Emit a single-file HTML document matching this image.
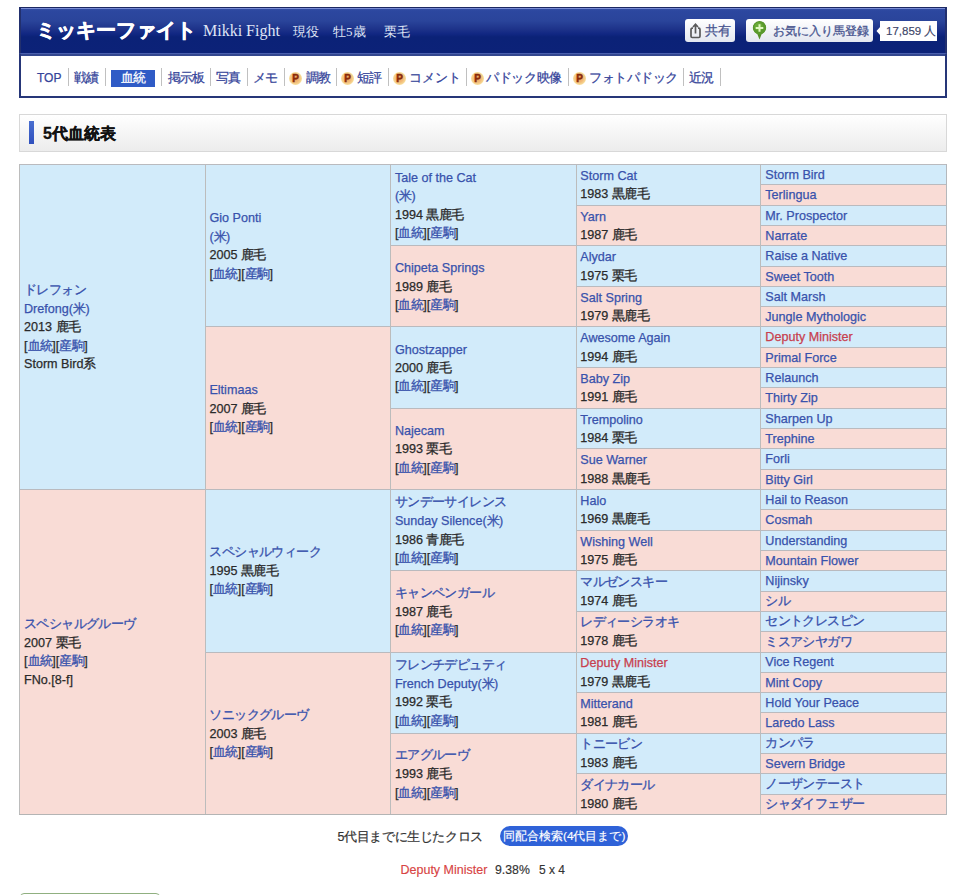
<!DOCTYPE html>
<html><head><meta charset="utf-8">
<style>
*{box-sizing:border-box}
html,body{margin:0;padding:0;background:#fff;width:962px;height:895px;overflow:hidden;position:relative;font-family:"Liberation Sans",sans-serif;color:#333}
.a{position:absolute;white-space:nowrap}
#hdr{position:absolute;left:19px;top:7px;width:928px;height:46px;background:linear-gradient(#3650a6 0px,#2c479f 3px,#2a449a 13px,#1e338a 21px,#112782 26px,#0b2277 29px,#0c2278 45px);border-top:1px solid #1c2862;border-left:2px solid #22306e;border-right:2px solid #22306e}
#hdr:before{content:"";position:absolute;left:0;right:0;top:0;height:1px;background:#7a8cd4}
#band{position:absolute;left:19px;top:53px;width:928px;height:3px;background:#33478f;border-top:1px solid #4a5fae;border-left:2px solid #263678;border-right:2px solid #263678}
#nav{position:absolute;left:19px;top:56px;width:928px;height:42px;background:#fff;border:2px solid #263678;border-top:none}
.ttl{color:#fff;font-weight:bold;font-size:20px;line-height:20px;-webkit-text-stroke:0.6px #fff}
.sub{color:#dfe5f5;font-family:"Liberation Serif",serif;font-size:16px;line-height:18px}
.subj{color:#dfe5f5;font-family:"Liberation Serif",serif;font-size:13px;line-height:16px}
.btn{position:absolute;border-radius:3px;background:linear-gradient(#ffffff,#e4e7f0)}
.bt{color:#4a5690;line-height:14px;-webkit-text-stroke:0.3px #4a5690}
.cnt{position:absolute;background:#fff}
.nv{font-size:12px;color:#35449a;line-height:14px;-webkit-text-stroke:0.25px #35449a}
.nj{font-size:13px;letter-spacing:-0.9px}
.sep{position:absolute;top:68px;width:1px;height:18px;background:#c0c0c0}
.act{position:absolute;left:111px;top:69.5px;width:44px;height:17px;background:#2f5bc6}
.pi{position:absolute;top:72px;width:13px;height:13px;border-radius:50%;background:radial-gradient(circle at 50% 50%,#eea060 0,#f2bb78 40%,#f7dc98 68%,#f6e4a8 100%)}
.pi:after{content:"P";position:absolute;left:3.2px;top:0;font-size:10px;font-weight:bold;color:#8a2a08;line-height:13px;-webkit-text-stroke:0.5px #8a2a08}
#sec{position:absolute;left:19px;top:114px;width:928px;height:38px;border:1px solid #d8d8d8;background:linear-gradient(#ffffff,#ececec)}
#sec .bar{position:absolute;left:9px;top:6px;width:5px;height:23px;background:linear-gradient(#4a6fd0,#2f50bd)}
#sec .t{position:absolute;left:23px;top:8.5px;font-size:16px;font-weight:bold;color:#111;white-space:nowrap;line-height:20px;-webkit-text-stroke:0.3px #111}
#tbl{position:absolute;left:19px;top:164px;width:928px;height:651px;border-right:1px solid #b4b8bc;border-bottom:1px solid #b4b4b4}
.cell{position:absolute;border-top:1px solid #bababe;border-left:1px solid #bcbcbc;overflow:hidden}
.cell.m{background:#d2ebfa}
.cell.f{background:#f9dcd6}
.ct{position:absolute;left:4px;right:0}
.ln{height:18.4px;line-height:18.4px;font-size:12.6px;white-space:nowrap;color:#2a2a2a;-webkit-text-stroke:0.25px currentColor}
.j{-webkit-text-stroke:0.3px currentColor;font-size:13px;letter-spacing:-0.6px}
.k{position:relative;top:-0.5px}
.l{color:#3852ac}
.r{color:#c8404e}
</style></head><body>
<div id="hdr"></div>
<div id="band"></div>
<div id="nav"></div>
<div class="a ttl" style="left:36px;top:20px">ミッキーファイト</div>
<div class="a sub" style="left:203px;top:22px">Mikki Fight</div>
<div class="a subj" style="left:293px;top:24px">現役</div>
<div class="a subj" style="left:333px;top:24px">牡5歳</div>
<div class="a subj" style="left:384px;top:24px">栗毛</div>

<div class="btn" style="left:685px;top:19px;width:50px;height:23px"></div>
<svg class="a" style="left:689px;top:22px" width="13" height="17" viewBox="0 0 13 17"><path d="M4 6.2 H3.2 Q2 6.2 2 7.4 V14.3 Q2 15.5 3.2 15.5 H9.8 Q11 15.5 11 14.3 V7.4 Q11 6.2 9.8 6.2 H9" fill="none" stroke="#5a5a5a" stroke-width="1.7"/><path d="M6.5 11.5 V2.5 M4 5 L6.5 2.2 L9 5" fill="none" stroke="#5a5a5a" stroke-width="1.7"/></svg>
<div class="a bt" style="left:705px;top:24px;font-size:12.5px">共有</div>

<div class="btn" style="left:745.5px;top:19px;width:127px;height:23px"></div>
<svg class="a" style="left:752px;top:20.5px" width="15" height="20" viewBox="0 0 15 20"><path d="M7.5 18.5 L5.2 12.8 A6.6 6.6 0 1 1 9.8 12.8 Z" fill="#558f28"/><circle cx="7.5" cy="7" r="6.5" fill="#5a9a2c"/><circle cx="6.6" cy="5.6" r="4.2" fill="#6eae3c" opacity="0.8"/><path d="M7.5 3.2 V10.8 M3.7 7 H11.3" stroke="#e0f8c0" stroke-width="2"/></svg>
<div class="a bt" style="left:773px;top:24px;font-size:11.5px">お気に入り馬登録</div>

<div class="cnt" style="left:880px;top:21px;width:57px;height:20px"></div>
<svg class="a" style="left:876px;top:26px" width="5" height="10"><path d="M5 0 L0.5 5 L5 10 Z" fill="#fff"/></svg>
<div class="a" style="left:886px;top:23.5px;font-size:11.5px;color:#3c4468;line-height:14px;-webkit-text-stroke:0.15px currentColor">17,859 人</div>

<div class="a nv" style="left:37px;top:71px">TOP</div>
<div class="sep" style="left:68px"></div>
<div class="a nv nj" style="left:74px;top:71px">戦績</div>
<div class="sep" style="left:105px"></div>
<div class="act"></div>
<div class="a nv nj" style="left:121px;top:71px;color:#fff;-webkit-text-stroke:0.25px #fff">血統</div>
<div class="sep" style="left:161px"></div>
<div class="a nv nj" style="left:168px;top:71px">掲示板</div>
<div class="sep" style="left:210px"></div>
<div class="a nv nj" style="left:216px;top:71px">写真</div>
<div class="sep" style="left:247px"></div>
<div class="a nv nj" style="left:252.5px;top:71px;">メモ</div>
<div class="sep" style="left:284px"></div>
<div class="pi" style="left:289px"></div>
<div class="a nv nj" style="left:306px;top:71px">調教</div>
<div class="sep" style="left:336px"></div>
<div class="pi" style="left:341px"></div>
<div class="a nv nj" style="left:357px;top:71px">短評</div>
<div class="sep" style="left:388px"></div>
<div class="pi" style="left:393px"></div>
<div class="a nv nj" style="left:409px;top:71px;letter-spacing:0px">コメント</div>
<div class="sep" style="left:466px"></div>
<div class="pi" style="left:471px"></div>
<div class="a nv nj" style="left:486px;top:71px;letter-spacing:-0.35px">パドック映像</div>
<div class="sep" style="left:568px"></div>
<div class="pi" style="left:573px"></div>
<div class="a nv nj" style="left:589px;top:71px;letter-spacing:-0.3px">フォトパドック</div>
<div class="sep" style="left:683px"></div>
<div class="a nv nj" style="left:689px;top:71px">近況</div>
<div class="sep" style="left:720px"></div>

<div id="sec"><div class="bar"></div><div class="t">5代血統表</div></div>
<div id="tbl"></div>
<div class="cell m" style="left:19px;top:164.000px;width:186px;height:325.000px"><div class="ct" style="top:116.50px;left:4.00px"><div class="ln"><span class="l"><span class="j k">ドレフォン</span></span></div><div class="ln"><span class="l">Drefong(<span class="j">米</span>)</span></div><div class="ln">2013 <span class="j">鹿毛</span></div><div class="ln">[<span class="l"><span class="j">血統</span></span>][<span class="l"><span class="j">産駒</span></span>]</div><div class="ln">Storm Bird<span class="j">系</span></div></div></div>
<div class="cell f" style="left:19px;top:489.000px;width:186px;height:325.000px"><div class="ct" style="top:125.70px;left:4.00px"><div class="ln"><span class="l"><span class="j k">スペシャルグルーヴ</span></span></div><div class="ln">2007 <span class="j">栗毛</span></div><div class="ln">[<span class="l"><span class="j">血統</span></span>][<span class="l"><span class="j">産駒</span></span>]</div><div class="ln">FNo.[8-f]</div></div></div>
<div class="cell m" style="left:205px;top:164.000px;width:185px;height:162.000px"><div class="ct" style="top:44.45px;left:3.40px"><div class="ln"><span class="l">Gio Ponti</span></div><div class="ln"><span class="l">(<span class="j">米</span>)</span></div><div class="ln">2005 <span class="j">鹿毛</span></div><div class="ln">[<span class="l"><span class="j">血統</span></span>][<span class="l"><span class="j">産駒</span></span>]</div></div></div>
<div class="cell f" style="left:205px;top:326.000px;width:185px;height:163.000px"><div class="ct" style="top:54.15px;left:3.40px"><div class="ln"><span class="l">Eltimaas</span></div><div class="ln">2007 <span class="j">鹿毛</span></div><div class="ln">[<span class="l"><span class="j">血統</span></span>][<span class="l"><span class="j">産駒</span></span>]</div></div></div>
<div class="cell m" style="left:205px;top:489.000px;width:185px;height:163.000px"><div class="ct" style="top:53.65px;left:3.40px"><div class="ln"><span class="l"><span class="j k">スペシャルウィーク</span></span></div><div class="ln">1995 <span class="j">黒鹿毛</span></div><div class="ln">[<span class="l"><span class="j">血統</span></span>][<span class="l"><span class="j">産駒</span></span>]</div></div></div>
<div class="cell f" style="left:205px;top:652.000px;width:185px;height:162.000px"><div class="ct" style="top:53.15px;left:3.40px"><div class="ln"><span class="l"><span class="j k">ソニックグルーヴ</span></span></div><div class="ln">2003 <span class="j">鹿毛</span></div><div class="ln">[<span class="l"><span class="j">血統</span></span>][<span class="l"><span class="j">産駒</span></span>]</div></div></div>
<div class="cell m" style="left:390px;top:164.000px;width:186px;height:81.000px"><div class="ct" style="top:3.83px;left:3.90px"><div class="ln"><span class="l">Tale of the Cat</span></div><div class="ln"><span class="l">(<span class="j">米</span>)</span></div><div class="ln">1994 <span class="j">黒鹿毛</span></div><div class="ln">[<span class="l"><span class="j">血統</span></span>][<span class="l"><span class="j">産駒</span></span>]</div></div></div>
<div class="cell f" style="left:390px;top:245.000px;width:186px;height:81.000px"><div class="ct" style="top:13.28px;left:3.90px"><div class="ln"><span class="l">Chipeta Springs</span></div><div class="ln">1989 <span class="j">鹿毛</span></div><div class="ln">[<span class="l"><span class="j">血統</span></span>][<span class="l"><span class="j">産駒</span></span>]</div></div></div>
<div class="cell m" style="left:390px;top:326.000px;width:186px;height:82.000px"><div class="ct" style="top:13.53px;left:3.90px"><div class="ln"><span class="l">Ghostzapper</span></div><div class="ln">2000 <span class="j">鹿毛</span></div><div class="ln">[<span class="l"><span class="j">血統</span></span>][<span class="l"><span class="j">産駒</span></span>]</div></div></div>
<div class="cell f" style="left:390px;top:408.000px;width:186px;height:81.000px"><div class="ct" style="top:12.78px;left:3.90px"><div class="ln"><span class="l">Najecam</span></div><div class="ln">1993 <span class="j">栗毛</span></div><div class="ln">[<span class="l"><span class="j">血統</span></span>][<span class="l"><span class="j">産駒</span></span>]</div></div></div>
<div class="cell m" style="left:390px;top:489.000px;width:186px;height:81.000px"><div class="ct" style="top:3.83px;left:3.90px"><div class="ln"><span class="l"><span class="j k">サンデーサイレンス</span></span></div><div class="ln"><span class="l">Sunday Silence(<span class="j">米</span>)</span></div><div class="ln">1986 <span class="j">青鹿毛</span></div><div class="ln">[<span class="l"><span class="j">血統</span></span>][<span class="l"><span class="j">産駒</span></span>]</div></div></div>
<div class="cell f" style="left:390px;top:570.000px;width:186px;height:82.000px"><div class="ct" style="top:13.28px;left:3.90px"><div class="ln"><span class="l"><span class="j k">キャンペンガール</span></span></div><div class="ln">1987 <span class="j">鹿毛</span></div><div class="ln">[<span class="l"><span class="j">血統</span></span>][<span class="l"><span class="j">産駒</span></span>]</div></div></div>
<div class="cell m" style="left:390px;top:652.000px;width:186px;height:81.000px"><div class="ct" style="top:3.33px;left:3.90px"><div class="ln"><span class="l"><span class="j k">フレンチデピュティ</span></span></div><div class="ln"><span class="l">French Deputy(<span class="j">米</span>)</span></div><div class="ln">1992 <span class="j">栗毛</span></div><div class="ln">[<span class="l"><span class="j">血統</span></span>][<span class="l"><span class="j">産駒</span></span>]</div></div></div>
<div class="cell f" style="left:390px;top:733.000px;width:186px;height:81.000px"><div class="ct" style="top:12.78px;left:3.90px"><div class="ln"><span class="l"><span class="j k">エアグルーヴ</span></span></div><div class="ln">1993 <span class="j">鹿毛</span></div><div class="ln">[<span class="l"><span class="j">血統</span></span>][<span class="l"><span class="j">産駒</span></span>]</div></div></div>
<div class="cell m" style="left:576px;top:164.000px;width:184px;height:41.000px"><div class="ct" style="top:1.91px;left:3.30px"><div class="ln"><span class="l">Storm Cat</span></div><div class="ln">1983 <span class="j">黒鹿毛</span></div></div></div>
<div class="cell f" style="left:576px;top:205.000px;width:184px;height:40.000px"><div class="ct" style="top:1.54px;left:3.30px"><div class="ln"><span class="l">Yarn</span></div><div class="ln">1987 <span class="j">鹿毛</span></div></div></div>
<div class="cell m" style="left:576px;top:245.000px;width:184px;height:41.000px"><div class="ct" style="top:2.16px;left:3.30px"><div class="ln"><span class="l">Alydar</span></div><div class="ln">1975 <span class="j">栗毛</span></div></div></div>
<div class="cell f" style="left:576px;top:286.000px;width:184px;height:40.000px"><div class="ct" style="top:1.79px;left:3.30px"><div class="ln"><span class="l">Salt Spring</span></div><div class="ln">1979 <span class="j">黒鹿毛</span></div></div></div>
<div class="cell m" style="left:576px;top:326.000px;width:184px;height:41.000px"><div class="ct" style="top:2.41px;left:3.30px"><div class="ln"><span class="l">Awesome Again</span></div><div class="ln">1994 <span class="j">鹿毛</span></div></div></div>
<div class="cell f" style="left:576px;top:367.000px;width:184px;height:41.000px"><div class="ct" style="top:2.04px;left:3.30px"><div class="ln"><span class="l">Baby Zip</span></div><div class="ln">1991 <span class="j">鹿毛</span></div></div></div>
<div class="cell m" style="left:576px;top:408.000px;width:184px;height:40.000px"><div class="ct" style="top:1.66px;left:3.30px"><div class="ln"><span class="l">Trempolino</span></div><div class="ln">1984 <span class="j">栗毛</span></div></div></div>
<div class="cell f" style="left:576px;top:448.000px;width:184px;height:41.000px"><div class="ct" style="top:2.29px;left:3.30px"><div class="ln"><span class="l">Sue Warner</span></div><div class="ln">1988 <span class="j">黒鹿毛</span></div></div></div>
<div class="cell m" style="left:576px;top:489.000px;width:184px;height:41.000px"><div class="ct" style="top:1.91px;left:3.30px"><div class="ln"><span class="l">Halo</span></div><div class="ln">1969 <span class="j">黒鹿毛</span></div></div></div>
<div class="cell f" style="left:576px;top:530.000px;width:184px;height:40.000px"><div class="ct" style="top:1.54px;left:3.30px"><div class="ln"><span class="l">Wishing Well</span></div><div class="ln">1975 <span class="j">鹿毛</span></div></div></div>
<div class="cell m" style="left:576px;top:570.000px;width:184px;height:41.000px"><div class="ct" style="top:2.16px;left:3.30px"><div class="ln"><span class="l"><span class="j k">マルゼンスキー</span></span></div><div class="ln">1974 <span class="j">鹿毛</span></div></div></div>
<div class="cell f" style="left:576px;top:611.000px;width:184px;height:41.000px"><div class="ct" style="top:1.79px;left:3.30px"><div class="ln"><span class="l"><span class="j k">レディーシラオキ</span></span></div><div class="ln">1978 <span class="j">鹿毛</span></div></div></div>
<div class="cell m" style="left:576px;top:652.000px;width:184px;height:40.000px"><div class="ct" style="top:1.41px;left:3.30px"><div class="ln"><span class="r">Deputy Minister</span></div><div class="ln">1979 <span class="j">黒鹿毛</span></div></div></div>
<div class="cell f" style="left:576px;top:692.000px;width:184px;height:41.000px"><div class="ct" style="top:2.04px;left:3.30px"><div class="ln"><span class="l">Mitterand</span></div><div class="ln">1981 <span class="j">鹿毛</span></div></div></div>
<div class="cell m" style="left:576px;top:733.000px;width:184px;height:40.000px"><div class="ct" style="top:1.66px;left:3.30px"><div class="ln"><span class="l"><span class="j k">トニービン</span></span></div><div class="ln">1983 <span class="j">鹿毛</span></div></div></div>
<div class="cell f" style="left:576px;top:773.000px;width:184px;height:41.000px"><div class="ct" style="top:2.29px;left:3.30px"><div class="ln"><span class="l"><span class="j k">ダイナカール</span></span></div><div class="ln">1980 <span class="j">鹿毛</span></div></div></div>
<div class="cell m" style="left:760px;top:164.000px;width:186px;height:20.000px"><div class="ct" style="top:0.96px;left:4.30px"><div class="ln"><span class="l">Storm Bird</span></div></div></div>
<div class="cell f" style="left:760px;top:184.000px;width:186px;height:21.000px"><div class="ct" style="top:1.27px;left:4.30px"><div class="ln"><span class="l">Terlingua</span></div></div></div>
<div class="cell m" style="left:760px;top:205.000px;width:186px;height:20.000px"><div class="ct" style="top:0.58px;left:4.30px"><div class="ln"><span class="l">Mr. Prospector</span></div></div></div>
<div class="cell f" style="left:760px;top:225.000px;width:186px;height:20.000px"><div class="ct" style="top:0.89px;left:4.30px"><div class="ln"><span class="l">Narrate</span></div></div></div>
<div class="cell m" style="left:760px;top:245.000px;width:186px;height:21.000px"><div class="ct" style="top:1.21px;left:4.30px"><div class="ln"><span class="l">Raise a Native</span></div></div></div>
<div class="cell f" style="left:760px;top:266.000px;width:186px;height:20.000px"><div class="ct" style="top:0.52px;left:4.30px"><div class="ln"><span class="l">Sweet Tooth</span></div></div></div>
<div class="cell m" style="left:760px;top:286.000px;width:186px;height:20.000px"><div class="ct" style="top:0.83px;left:4.30px"><div class="ln"><span class="l">Salt Marsh</span></div></div></div>
<div class="cell f" style="left:760px;top:306.000px;width:186px;height:20.000px"><div class="ct" style="top:1.14px;left:4.30px"><div class="ln"><span class="l">Jungle Mythologic</span></div></div></div>
<div class="cell m" style="left:760px;top:326.000px;width:186px;height:21.000px"><div class="ct" style="top:1.46px;left:4.30px"><div class="ln"><span class="r">Deputy Minister</span></div></div></div>
<div class="cell f" style="left:760px;top:347.000px;width:186px;height:20.000px"><div class="ct" style="top:0.77px;left:4.30px"><div class="ln"><span class="l">Primal Force</span></div></div></div>
<div class="cell m" style="left:760px;top:367.000px;width:186px;height:20.000px"><div class="ct" style="top:1.08px;left:4.30px"><div class="ln"><span class="l">Relaunch</span></div></div></div>
<div class="cell f" style="left:760px;top:387.000px;width:186px;height:21.000px"><div class="ct" style="top:1.39px;left:4.30px"><div class="ln"><span class="l">Thirty Zip</span></div></div></div>
<div class="cell m" style="left:760px;top:408.000px;width:186px;height:20.000px"><div class="ct" style="top:0.71px;left:4.30px"><div class="ln"><span class="l">Sharpen Up</span></div></div></div>
<div class="cell f" style="left:760px;top:428.000px;width:186px;height:20.000px"><div class="ct" style="top:1.02px;left:4.30px"><div class="ln"><span class="l">Trephine</span></div></div></div>
<div class="cell m" style="left:760px;top:448.000px;width:186px;height:21.000px"><div class="ct" style="top:1.33px;left:4.30px"><div class="ln"><span class="l">Forli</span></div></div></div>
<div class="cell f" style="left:760px;top:469.000px;width:186px;height:20.000px"><div class="ct" style="top:0.64px;left:4.30px"><div class="ln"><span class="l">Bitty Girl</span></div></div></div>
<div class="cell m" style="left:760px;top:489.000px;width:186px;height:20.000px"><div class="ct" style="top:0.96px;left:4.30px"><div class="ln"><span class="l">Hail to Reason</span></div></div></div>
<div class="cell f" style="left:760px;top:509.000px;width:186px;height:21.000px"><div class="ct" style="top:1.27px;left:4.30px"><div class="ln"><span class="l">Cosmah</span></div></div></div>
<div class="cell m" style="left:760px;top:530.000px;width:186px;height:20.000px"><div class="ct" style="top:0.58px;left:4.30px"><div class="ln"><span class="l">Understanding</span></div></div></div>
<div class="cell f" style="left:760px;top:550.000px;width:186px;height:20.000px"><div class="ct" style="top:0.89px;left:4.30px"><div class="ln"><span class="l">Mountain Flower</span></div></div></div>
<div class="cell m" style="left:760px;top:570.000px;width:186px;height:21.000px"><div class="ct" style="top:1.21px;left:4.30px"><div class="ln"><span class="l">Nijinsky</span></div></div></div>
<div class="cell f" style="left:760px;top:591.000px;width:186px;height:20.000px"><div class="ct" style="top:0.52px;left:4.30px"><div class="ln"><span class="l"><span class="j k">シル</span></span></div></div></div>
<div class="cell m" style="left:760px;top:611.000px;width:186px;height:20.000px"><div class="ct" style="top:0.83px;left:4.30px"><div class="ln"><span class="l"><span class="j k">セントクレスピン</span></span></div></div></div>
<div class="cell f" style="left:760px;top:631.000px;width:186px;height:21.000px"><div class="ct" style="top:1.14px;left:4.30px"><div class="ln"><span class="l"><span class="j k">ミスアシヤガワ</span></span></div></div></div>
<div class="cell m" style="left:760px;top:652.000px;width:186px;height:20.000px"><div class="ct" style="top:0.46px;left:4.30px"><div class="ln"><span class="l">Vice Regent</span></div></div></div>
<div class="cell f" style="left:760px;top:672.000px;width:186px;height:20.000px"><div class="ct" style="top:0.77px;left:4.30px"><div class="ln"><span class="l">Mint Copy</span></div></div></div>
<div class="cell m" style="left:760px;top:692.000px;width:186px;height:20.000px"><div class="ct" style="top:1.08px;left:4.30px"><div class="ln"><span class="l">Hold Your Peace</span></div></div></div>
<div class="cell f" style="left:760px;top:712.000px;width:186px;height:21.000px"><div class="ct" style="top:1.39px;left:4.30px"><div class="ln"><span class="l">Laredo Lass</span></div></div></div>
<div class="cell m" style="left:760px;top:733.000px;width:186px;height:20.000px"><div class="ct" style="top:0.71px;left:4.30px"><div class="ln"><span class="l"><span class="j k">カンパラ</span></span></div></div></div>
<div class="cell f" style="left:760px;top:753.000px;width:186px;height:20.000px"><div class="ct" style="top:1.02px;left:4.30px"><div class="ln"><span class="l">Severn Bridge</span></div></div></div>
<div class="cell m" style="left:760px;top:773.000px;width:186px;height:21.000px"><div class="ct" style="top:1.33px;left:4.30px"><div class="ln"><span class="l"><span class="j k">ノーザンテースト</span></span></div></div></div>
<div class="cell f" style="left:760px;top:794.000px;width:186px;height:20.000px"><div class="ct" style="top:0.64px;left:4.30px"><div class="ln"><span class="l"><span class="j k">シャダイフェザー</span></span></div></div></div>
<div class="a" style="left:337.5px;top:829.5px;font-size:12.5px;letter-spacing:-0.38px;line-height:14px;color:#333;-webkit-text-stroke:0.2px #333">5代目までに生じたクロス</div>
<div class="a" style="left:500px;top:826px;width:128px;height:20px;border-radius:10px;background:#2f62d8"></div>
<div class="a" style="left:503px;top:829px;font-size:11.8px;line-height:14px;color:#fff;-webkit-text-stroke:0.15px #fff">同配合検索(4代目まで)</div>
<div class="a" style="left:400.5px;top:863px;font-size:12.5px;line-height:14px;color:#d84444;-webkit-text-stroke:0.15px currentColor">Deputy Minister</div>
<div class="a" style="left:495px;top:863px;font-size:12.3px;line-height:14px;color:#333;-webkit-text-stroke:0.15px currentColor">9.38%</div>
<div class="a" style="left:539px;top:863px;font-size:12px;line-height:14px;color:#333;-webkit-text-stroke:0.15px currentColor">5 x 4</div>
<div class="a" style="left:20px;top:892.5px;width:140px;height:10px;border:1.5px solid #90b080;border-radius:4px;background:#fff"></div>
</body></html>
